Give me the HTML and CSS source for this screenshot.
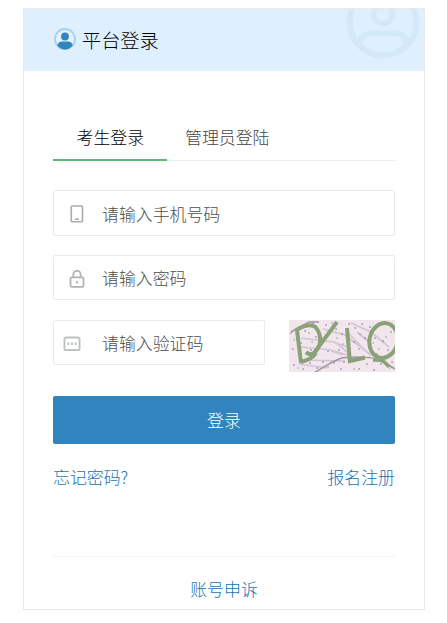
FILE: index.html
```html
<!DOCTYPE html>
<html lang="zh-CN">
<head>
    <meta charset="UTF-8">
    <meta name="viewport" content="width=device-width, initial-scale=1.0">
    <title>平台登录</title>
    <link rel="stylesheet" href="styles.css">
</head>
<body>

<div class="login-box">
    <div class="login-header">
        <svg class="user-icon" width="22" height="22" viewBox="0 0 22 22">
            <circle cx="11" cy="11" r="10" fill="#e3f2fc" stroke="#a9d0ea" stroke-width="1.8"/>
            <circle cx="11" cy="8.5" r="3.9" fill="#3085bf"/>
            <path d="M3.5 17.5c0-2.7 2.500-4 5-4h5c2.500 0 5 1.300 5 4-1.800 2.600-4.600 4-7.500 4s-5.700-1.400-7.500-4z" fill="#3085bf"/>
        </svg>
        <h1>平台登录</h1>
        <svg class="header-bg" width="74" height="51" viewBox="0 0 74 51" fill="none" stroke="#d4e9f7">
            <circle cx="37" cy="13" r="33.500" stroke-width="6"/>
            <circle cx="37" cy="5" r="9.500" stroke-width="5.500"/>
            <path d="M13 37c1-8 5-12.500 12-12.500h24c7 0 11 4.500 12 12.500" stroke-width="6"/>
        </svg>
    </div>

    <form class="login-form">
        <div class="tabs">
            <a class="tab active">考生登录</a>
            <a class="tab">管理员登陆</a>
        </div>

        <div class="field phone">
            <svg width="14" height="18" viewBox="0 0 14 18" fill="none" stroke="#aaacae" stroke-width="1.6">
                <rect x="1.300" y="1" width="11.200" height="15.800" rx="0.800"/>
                <path d="M5 14.200h4"/>
            </svg>
            <input type="text" placeholder="请输入手机号码">
        </div>

        <div class="field password">
            <svg width="16" height="18" viewBox="0 0 16 18" fill="none" stroke="#b3b3b3" stroke-width="1.800">
                <rect x="1.500" y="7.300" width="13" height="9.500" rx="1.200"/>
                <path d="M4.300 7.300V4.500a3.700 3.700 0 0 1 7.400 0v2.800M8 11v2.500"/>
            </svg>
            <input type="password" placeholder="请输入密码">
        </div>

        <div class="code-row">
            <div class="field code">
                <svg width="18" height="16" viewBox="0 0 18 16" fill="none" stroke="#bfc2c2" stroke-width="2">
                    <rect x="1.500" y="1.500" width="15" height="12.500" rx="1.500"/>
                    <path d="M4.300 7.800h2M8 7.800h2M11.700 7.800h2" stroke-width="2.600"/>
                </svg>
                <input type="text" placeholder="请输入验证码">
            </div>
            <svg class="captcha" width="106" height="52" viewBox="0 0 106 52" fill="none">
                <rect width="106" height="52" fill="#f0e6ec"/>
                <g stroke="#d6c3d6" stroke-width="1.700">
                    <path d="M12 18l32 4 18 6M12 27l30 3 20 6M34 9l22 6 26 20M62 3l20 9 18 15M10 44l28 4M42 31l12 4M60 14l22 22M68 12l12 10M46 22l12 10M14 40l42 1"/>
                </g>
                <!-- noise dots -->
                <g stroke="#62629a" stroke-width="1.300" stroke-linecap="round">
                    <path d="M2 13h.1M8 9h.1M24 3h.1M27 17h.1M16 11h.1M12 23h.1M22 30h.1M31 22h.1M37 5h.1M40 14h.1M47 9h.1M53 14h.1M60 4h.1M66 8h.1M73 4h.1M81 7h.1M91 4h.1M76 18h.1M86 18h.1M70 29h.1M80 28h.1M88 34h.1M94 21h.1M99 30h.1M5 45h.1M14 49h.1M21 43h.1M28 48h.1M34 42h.1M45 43h.1M50 30h.1M55 42h.1M52 49h.1M70 49h.1M78 44h.1M85 50h.1M92 44h.1M103 42h.1M4 29h.1M39 31h.1M65 22h.1M102 12h.1"/>
                </g>
                <g stroke="#6aa787" stroke-width="1.300" stroke-linecap="round">
                    <path d="M5 20h.1M20 13h.1M23 22h.1M29 28h.1M48 18h.1M54 24h.1M71 14h.1M84 23h.1M90 29h.1M97 17h.1M39 47h.1M65 49h.1M75 38h.1M9 48h.1M101 48h.1M43 3h.1"/>
                </g>
                <path d="M2 12l18-10 10 0M26 52c8-4 16-10 24-13 8-3 30-2 40 0l16 10" stroke="#a295a1" stroke-width="1.500"/>
                <g stroke="#8ba177" stroke-width="4">
                    <path d="M8 10l4 33M6 11c8-6 18-8 22-2 5 8 4 17-2 23-3 3-6 3-9 0M12 42c8-2 12-4 15-9M48 2L25 33"/>
                    <path d="M58 8l3 35M59 41.500l17-4"/>
                    <ellipse cx="94.500" cy="20.500" rx="14" ry="17.500" transform="rotate(12 94.500 20.500)"/>
                    <path d="M84 40c8 0 10-1 16 7" stroke-width="3.500"/>
                </g>
            </svg>
        </div>

        <button type="button">登录</button>

        <div class="links">
            <a>忘记密码?</a>
            <a>报名注册</a>
        </div>

        <div class="appeal"><a>账号申诉</a></div>
    </form>
</div>

</body>
</html>
```
FILE: styles.css
```css
*{
    padding: 0;
    margin: 0;
    box-sizing: border-box;
}

body{
    background-color: #fff;
    font-family: "Noto Sans CJK SC", sans-serif;
    font-size: 16.9px;
    font-weight: 300;
    line-height: 24px;
}

.login-box{
    width: 402px;
    height: 602px;
    margin: 8px 0 0 23px;
    border: 1px solid #e9eaeb;
}

.login-header{
    position: relative;
    display: flex;
    align-items: center;
    height: 62px;
    padding-left: 30px;
    background-color: #def0fd;
}

.login-header h1{
    margin-left: 6px;
    font-size: 19.2px;
    font-weight: 300;
    color: #000;
}

.user-icon{
    margin-top: -2px;
}

.header-bg{
    position: absolute;
    top: 0;
    right: 4px;
}

.login-form{
    padding: 43px 29px 0;
}

.tabs{
    display: flex;
    height: 47px;
    border-bottom: 1px solid #ededed;
}

.tab{
    height: 47px;
    padding: 11px 0 0 18px;
    color: #444;
}

.tab.active{
    width: 114px;
    padding-left: 23.5px;
    border-bottom: 2px solid #5fb878;
    color: #000;
}

.field{
    display: flex;
    align-items: center;
    height: 45px;
    border: 1px solid #ebebeb;
    border-radius: 2px;
}

.phone{
    height: 46px;
    margin-top: 29px;
    padding-left: 16px;
}

.phone svg{
    margin: 2px 18px 0 0;
}

.password{
    margin-top: 19px;
    padding-left: 15px;
}

.password svg{
    margin: 2px 17px 0 0;
}

.code{
    width: 212px;
    padding-left: 9px;
}

.code svg{
    margin: 2px 21px 0 0;
}

.code-row{
    display: flex;
    justify-content: space-between;
    margin-top: 20px;
}

input{
    flex: 1;
    min-width: 0;
    height: 43px;
    border: none;
    outline: none;
    background: transparent;
    font: inherit;
}

input::placeholder{
    color: #4d4d4d;
}

button{
    display: block;
    width: 100%;
    height: 48px;
    margin-top: 24px;
    border: none;
    border-radius: 2px;
    background-color: #3085bf;
    color: #fff;
    font: inherit;
}

.links{
    display: flex;
    justify-content: space-between;
    margin-top: 21px;
}

a{
    color: #1873b3;
}

.appeal{
    margin-top: 67px;
    padding-top: 20px;
    border-top: 1px dotted #ececec;
    text-align: center;
}
```
